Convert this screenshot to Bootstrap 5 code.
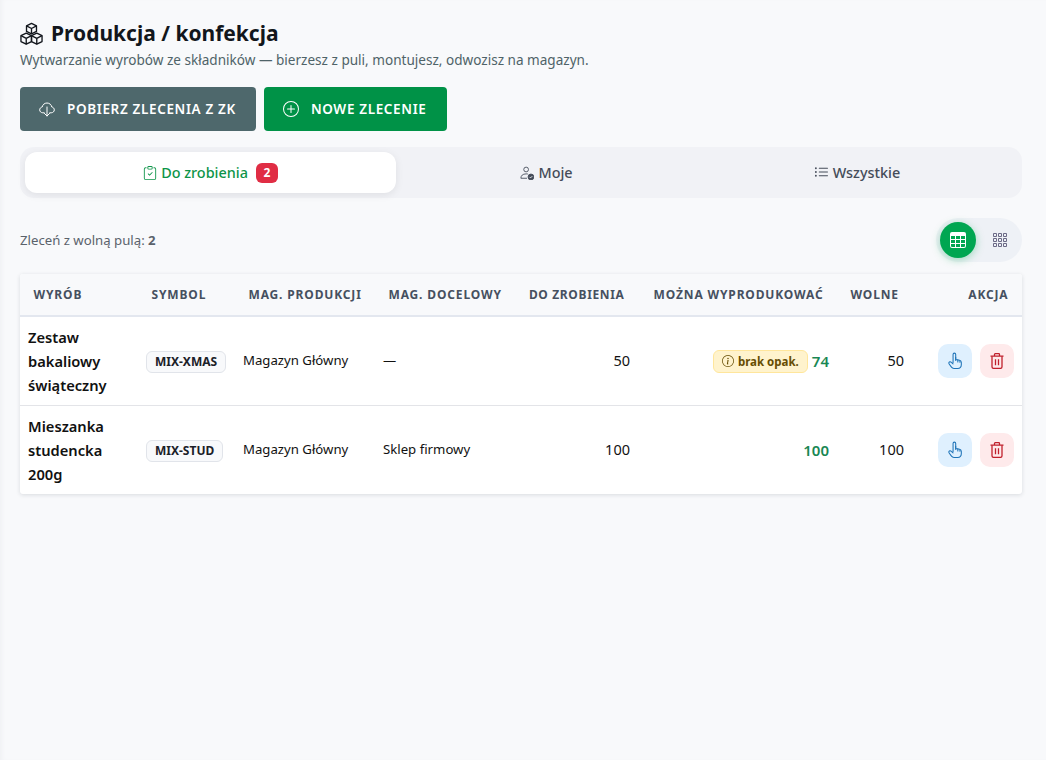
<!DOCTYPE html>
<html lang="pl">
<head>
<meta charset="utf-8">
<title>Produkcja / konfekcja</title>
<link href="https://cdn.jsdelivr.net/npm/bootstrap@5.3.0/dist/css/bootstrap.min.css" rel="stylesheet">
<style>
html,body{height:100%}
body{font-family:"Noto Sans",sans-serif;background:#f8f9fb;color:#111;box-shadow:inset 4px 0 4px -2px #f0f1f4}
.page-wrap{padding:18px 24px 20px 20px}
.page-title{font-size:21px;font-weight:700;line-height:30px;margin:0;color:#12161c}
.page-sub{font-size:13.57px;line-height:20px;color:#4f6368;margin:2px 0 17px}
.act-btn{height:44px;border-radius:4px;border:0;color:#fff;font-size:13.5px;font-weight:600;letter-spacing:.65px;text-transform:uppercase;padding:0 20px 0 19px;display:inline-flex;align-items:center;gap:12px}
.act-btn:hover,.act-btn:active{color:#fff}
.act-grey,.act-grey:hover{background:#4e686c}
.act-green,.act-green:hover{background:#009247}
.tab-bar{background:#f1f2f6;border-radius:14px;padding:5px;height:51px;margin-top:16px}
.tab-bar .nav-link{height:41px;border-radius:12px;color:#454c59;font-size:14.4px;font-weight:500;display:flex;align-items:center;justify-content:center;gap:4px;padding:0}
.tab-a{flex:371 1 0}.tab-b{flex:301 1 0}.tab-c{flex:320 1 0}
.tab-bar .nav-link.active{background:#fff;color:#0d9448;box-shadow:0 2px 8px rgba(0,0,0,.08)}
.count-pill{background:#e02d44;color:#fff;font-size:12px;font-weight:700;border-radius:6px;padding:0;width:22px;height:20px;line-height:20px;margin-left:4px}
.info-row{margin:20px 0 12px;height:44px}
.info-text{font-size:13.2px;color:#5a626b;position:relative;top:1px}
.info-text b{font-weight:700}
.view-pill{background:#eef1f6;border-radius:22px;padding:4px;gap:6px;height:44px}
.view-btn{width:36px;height:36px;border-radius:50%;border:0;background:transparent;display:flex;align-items:center;justify-content:center;padding:0;color:#6b6a86}
.view-btn.on{background:#00a651;color:#fff;box-shadow:0 2px 9px rgba(0,166,81,.35)}
.tbl-box{background:#fff;box-shadow:0 1px 4px rgba(30,40,60,.14);border-radius:3px;overflow:hidden}
.tbl-main{table-layout:fixed;width:100%;margin:0;--bs-table-bg:transparent}
.tbl-main th{background:#f8f9fb;font-size:12px;font-weight:700;letter-spacing:.85px;text-transform:uppercase;color:#465060;padding:0 13.5px;height:42px;vertical-align:middle;border-bottom:2px solid #e3e7ef;white-space:nowrap}
.tbl-main th.th-tight{letter-spacing:.65px}
.tbl-main td{padding:8px;vertical-align:middle;font-size:14.5px;color:#111;border-bottom:1px solid #e3e4e8;height:89px}
.tbl-main tr:last-child td{border-bottom:0;height:88px}
.tbl-main td.prod{font-weight:600;font-size:14.7px;line-height:24px}
.tbl-main td.wh{font-size:13.2px}
.sym-tag{display:inline-block;background:#f8f9fb;border:1px solid #e1e4ea;border-radius:6px;font-size:12px;font-weight:700;padding:0 8px;height:22px;line-height:20px;color:#1b2028;white-space:nowrap}
.warn-tag{display:inline-flex;align-items:center;gap:4px;background:#fff3cd;border:1px solid #ffe69c;border-radius:6px;color:#664d03;font-size:11.5px;font-weight:700;height:23px;padding:0 8px;margin-right:4px;white-space:nowrap;vertical-align:middle}
.num-ok{color:#198754;font-weight:600;font-size:15px;vertical-align:middle}
.icon-act{width:34px;height:34px;border-radius:10px;border:0;padding:0;display:flex;align-items:center;justify-content:center}
.icon-blue{background:#dff0fe;color:#1f74b8}
.icon-red{background:#feeaeb;color:#c0202c}
svg{display:block;flex:none}
</style>
</head>
<body>
<div class="page-wrap">
  <div class="d-flex align-items-center gap-2">
    <svg width="23" height="23" viewBox="0 0 24 24" fill="none" stroke="#12161c" stroke-width="1.4" stroke-linejoin="round"><path d="M12 1.500l5.200 2.600v5.700L12 12.400 6.800 9.800V4.100z"/><path d="M6.800 4.100L12 6.800l5.200-2.700M12 6.800v5.600"/><path d="M6.500 11.600l5.500 2.700v6.100l-5.500 2.700L1 20.400V14.300z"/><path d="M1 14.300l5.500 2.800 5.500-2.800M6.500 17.100v6"/><path d="M17.500 11.600l5.500 2.700v6.100l-5.500 2.700-5.500-2.700V14.300z"/><path d="M12 14.300l5.500 2.800 5.500-2.800M17.500 17.100v6"/></svg>
    <h1 class="page-title">Produkcja / konfekcja</h1>
  </div>
  <p class="page-sub">Wytwarzanie wyrobów ze składników — bierzesz z puli, montujesz, odwozisz na magazyn.</p>
  <div class="d-flex gap-2">
    <button class="btn act-btn act-grey" type="button">
      <svg width="16" height="16" viewBox="0 0 16 16" fill="none" stroke="currentColor" stroke-width="1" stroke-linecap="round" stroke-linejoin="round"><path d="M5.200 11.800H3.800C2 11.800.7 10.500.7 8.900c0-1.500 1.100-2.700 2.500-2.900C3.600 3.700 5.600 2 8 2s4.400 1.700 4.800 4c1.400.2 2.500 1.400 2.500 2.900 0 1.600-1.300 2.900-3.100 2.900h-1.400"/><path d="M8 6v9M5.400 12.400L8 15l2.600-2.600"/></svg>
      Pobierz zlecenia z ZK
    </button>
    <button class="btn act-btn act-green" type="button">
      <svg width="16" height="16" viewBox="0 0 16 16" fill="currentColor"><path d="M8 15A7 7 0 1 1 8 1a7 7 0 0 1 0 14zm0 1A8 8 0 1 0 8 0a8 8 0 0 0 0 16z"/><path d="M8 4a.5.5 0 0 1 .5.5v3h3a.5.5 0 0 1 0 1h-3v3a.5.5 0 0 1-1 0v-3h-3a.5.5 0 0 1 0-1h3v-3A.5.5 0 0 1 8 4z"/></svg>
      Nowe zlecenie
    </button>
  </div>

  <ul class="nav tab-bar">
    <li class="nav-item tab-a"><a class="nav-link active" href="#">
      <svg width="14" height="16" viewBox="0 0 16 16" fill="currentColor"><path fill-rule="evenodd" d="M10.854 7.146a.5.5 0 0 1 0 .708l-3 3a.5.5 0 0 1-.708 0l-1.500-1.500a.5.5 0 1 1 .708-.708L7.500 9.793l2.646-2.647a.5.5 0 0 1 .708 0z"/><path d="M4 1.500H3a2 2 0 0 0-2 2V14a2 2 0 0 0 2 2h10a2 2 0 0 0 2-2V3.500a2 2 0 0 0-2-2h-1v1h1a1 1 0 0 1 1 1V14a1 1 0 0 1-1 1H3a1 1 0 0 1-1-1V3.500a1 1 0 0 1 1-1h1v-1z"/><path d="M9.500 1a.5.5 0 0 1 .5.500v1a.5.5 0 0 1-.5.500h-3a.5.5 0 0 1-.5-.5v-1a.5.5 0 0 1 .5-.5h3zm-3-1A1.500 1.500 0 0 0 5 1.500v1A1.500 1.500 0 0 0 6.500 4h3A1.500 1.500 0 0 0 11 2.500v-1A1.500 1.500 0 0 0 9.500 0h-3z"/></svg>
      Do zrobienia <span class="badge count-pill">2</span></a></li>
    <li class="nav-item tab-b"><a class="nav-link" href="#">
      <svg width="14" height="14" viewBox="0 0 16 16" fill="none" stroke="currentColor" stroke-width="1"><circle cx="7" cy="4" r="2.700"/><path d="M1 14c0-3 2-5 6-5 .8 0 1.500.1 2 .2M1 14h7"/><circle cx="12.500" cy="12.500" r="3.300" fill="currentColor"/><path d="M11 12.500l1.100 1.100 1.900-2" stroke="#f1f2f6"/></svg>
      Moje</a></li>
    <li class="nav-item tab-c"><a class="nav-link" href="#">
      <svg width="15" height="15" viewBox="0 0 16 16" fill="currentColor"><path fill-rule="evenodd" d="M5 11.500a.5.5 0 0 1 .5-.5h9a.5.5 0 0 1 0 1h-9a.5.5 0 0 1-.5-.5zm0-4a.5.5 0 0 1 .5-.5h9a.5.5 0 0 1 0 1h-9a.5.5 0 0 1-.5-.5zm0-4a.5.5 0 0 1 .5-.5h9a.5.5 0 0 1 0 1h-9a.5.5 0 0 1-.5-.5zm-3 1a1 1 0 1 0 0-2 1 1 0 0 0 0 2zm0 4a1 1 0 1 0 0-2 1 1 0 0 0 0 2zm0 4a1 1 0 1 0 0-2 1 1 0 0 0 0 2z"/></svg>
      Wszystkie</a></li>
  </ul>

  <div class="d-flex justify-content-between align-items-center info-row">
    <span class="info-text">Zleceń z wolną pulą: <b>2</b></span>
    <div class="d-flex view-pill">
      <button class="view-btn on" type="button" aria-label="Tabela"><svg width="16" height="16" viewBox="0 0 16 16" fill="currentColor"><path d="M0 2a2 2 0 0 1 2-2h12a2 2 0 0 1 2 2v12a2 2 0 0 1-2 2H2a2 2 0 0 1-2-2V2zm15 2h-4v3h4V4zm0 4h-4v3h4V8zm0 4h-4v3h3a1 1 0 0 0 1-1v-2zm-5 3v-3H6v3h4zm-5 0v-3H1v2a1 1 0 0 0 1 1h3zm-4-4h4V8H1v3zm0-4h4V4H1v3zm5-3v3h4V4H6zm4 4H6v3h4V8z"/></svg></button>
      <button class="view-btn" type="button" aria-label="Siatka"><svg width="16" height="16" viewBox="0 0 16 16" fill="currentColor"><path d="M4 2v2H2V2h2zm1 12v-2a1 1 0 0 0-1-1H2a1 1 0 0 0-1 1v2a1 1 0 0 0 1 1h2a1 1 0 0 0 1-1zm0-5V7a1 1 0 0 0-1-1H2a1 1 0 0 0-1 1v2a1 1 0 0 0 1 1h2a1 1 0 0 0 1-1zm0-5V2a1 1 0 0 0-1-1H2a1 1 0 0 0-1 1v2a1 1 0 0 0 1 1h2a1 1 0 0 0 1-1zm5 10v-2a1 1 0 0 0-1-1H7a1 1 0 0 0-1 1v2a1 1 0 0 0 1 1h2a1 1 0 0 0 1-1zm0-5V7a1 1 0 0 0-1-1H7a1 1 0 0 0-1 1v2a1 1 0 0 0 1 1h2a1 1 0 0 0 1-1zm0-5V2a1 1 0 0 0-1-1H7a1 1 0 0 0-1 1v2a1 1 0 0 0 1 1h2a1 1 0 0 0 1-1zM9 2v2H7V2h2zm5 0v2h-2V2h2zM4 7v2H2V7h2zm5 0v2H7V7h2zm5 0h-2v2h2V7zM4 12v2H2v-2h2zm5 0v2H7v-2h2zm5 0v2h-2v-2h2zM12 1a1 1 0 0 0-1 1v2a1 1 0 0 0 1 1h2a1 1 0 0 0 1-1V2a1 1 0 0 0-1-1h-2zm-1 6a1 1 0 0 1 1-1h2a1 1 0 0 1 1 1v2a1 1 0 0 1-1 1h-2a1 1 0 0 1-1-1V7zm1 4a1 1 0 0 0-1 1v2a1 1 0 0 0 1 1h2a1 1 0 0 0 1-1v-2a1 1 0 0 0-1-1h-2z"/></svg></button>
    </div>
  </div>

  <div class="tbl-box">
    <table class="table tbl-main">
      <colgroup><col style="width:118px"><col style="width:97px"><col style="width:140px"><col style="width:140px"><col style="width:123px"><col style="width:199px"><col style="width:75px"><col style="width:110px"></colgroup>
      <thead><tr><th>Wyrób</th><th>Symbol</th><th>Mag. produkcji</th><th>Mag. docelowy</th><th class="text-end th-tight">Do zrobienia</th><th class="text-end">Można wyprodukować</th><th class="text-end">Wolne</th><th class="text-end">Akcja</th></tr></thead>
      <tbody>
        <tr>
          <td class="prod">Zestaw bakaliowy świąteczny</td>
          <td><span class="sym-tag">MIX-XMAS</span></td>
          <td class="wh">Magazyn Główny</td>
          <td class="wh">—</td>
          <td class="text-end">50</td>
          <td class="text-end"><span class="warn-tag"><svg width="12" height="12" viewBox="0 0 16 16" fill="currentColor"><path d="M8 15A7 7 0 1 1 8 1a7 7 0 0 1 0 14zm0 1A8 8 0 1 0 8 0a8 8 0 0 0 0 16z"/><path d="m8.930 6.588-2.290.287-.082.380.450.083c.294.070.352.176.288.469l-.738 3.468c-.194.897.105 1.319.808 1.319.545 0 1.178-.252 1.465-.598l.088-.416c-.2.176-.492.246-.686.246-.275 0-.375-.193-.304-.533L8.930 6.588zM9 4.500a1 1 0 1 1-2 0 1 1 0 0 1 2 0z"/></svg>brak opak.</span><span class="num-ok">74</span></td>
          <td class="text-end">50</td>
          <td><div class="d-flex justify-content-end gap-2">
            <button class="icon-act icon-blue" type="button" aria-label="Pobierz"><svg width="17" height="18" viewBox="0 0 16 17" fill="none" stroke="currentColor" stroke-width="1" stroke-linecap="round" stroke-linejoin="round"><path d="M5.700 10V2.300a1.250 1.250 0 0 1 2.500 0V7l3.600.8c1 .25 1.700 1 1.700 2.100v1.900c0 2-1.400 3.700-3.400 3.700H6.500c-1 0-1.700-.4-2.300-1.200L2 11.300c-.7-1-.1-2.100.8-2.100.6 0 1.100.3 1.500.8l1.400 1.300"/><path d="M8.200 5v3M10.200 7.400v2M12.200 8.200v1.500"/></svg></button>
            <button class="icon-act icon-red" type="button" aria-label="Usuń"><svg width="16" height="16" viewBox="0 0 16 16" fill="none" stroke="currentColor" stroke-width="1.300" stroke-linejoin="round"><path d="M1.500 3.200h13M5.500 3V1.500c0-.4.300-.8.800-.8h3.400c.5 0 .8.400.8.800V3"/><path d="M3 3.200v10.600c0 .9.700 1.600 1.600 1.600h6.800c.9 0 1.600-.7 1.600-1.600V3.200"/><path d="M6.500 6.200v6M9.500 6.200v6"/></svg></button>
          </div></td>
        </tr>
        <tr>
          <td class="prod">Mieszanka studencka 200g</td>
          <td><span class="sym-tag">MIX-STUD</span></td>
          <td class="wh">Magazyn Główny</td>
          <td class="wh">Sklep firmowy</td>
          <td class="text-end">100</td>
          <td class="text-end"><span class="num-ok">100</span></td>
          <td class="text-end">100</td>
          <td><div class="d-flex justify-content-end gap-2">
            <button class="icon-act icon-blue" type="button" aria-label="Pobierz"><svg width="17" height="18" viewBox="0 0 16 17" fill="none" stroke="currentColor" stroke-width="1" stroke-linecap="round" stroke-linejoin="round"><path d="M5.700 10V2.300a1.250 1.250 0 0 1 2.500 0V7l3.600.8c1 .25 1.700 1 1.700 2.100v1.900c0 2-1.400 3.700-3.400 3.700H6.500c-1 0-1.700-.4-2.300-1.200L2 11.300c-.7-1-.1-2.100.8-2.100.6 0 1.100.3 1.500.8l1.400 1.300"/><path d="M8.200 5v3M10.200 7.400v2M12.200 8.200v1.500"/></svg></button>
            <button class="icon-act icon-red" type="button" aria-label="Usuń"><svg width="16" height="16" viewBox="0 0 16 16" fill="none" stroke="currentColor" stroke-width="1.300" stroke-linejoin="round"><path d="M1.500 3.200h13M5.500 3V1.500c0-.4.300-.8.800-.8h3.400c.5 0 .8.400.8.800V3"/><path d="M3 3.200v10.600c0 .9.700 1.600 1.600 1.600h6.800c.9 0 1.600-.7 1.600-1.600V3.200"/><path d="M6.500 6.200v6M9.500 6.200v6"/></svg></button>
          </div></td>
        </tr>
      </tbody>
    </table>
  </div>
</div>
<script src="https://cdn.jsdelivr.net/npm/bootstrap@5.3.0/dist/js/bootstrap.bundle.min.js"></script>
</body>
</html>
